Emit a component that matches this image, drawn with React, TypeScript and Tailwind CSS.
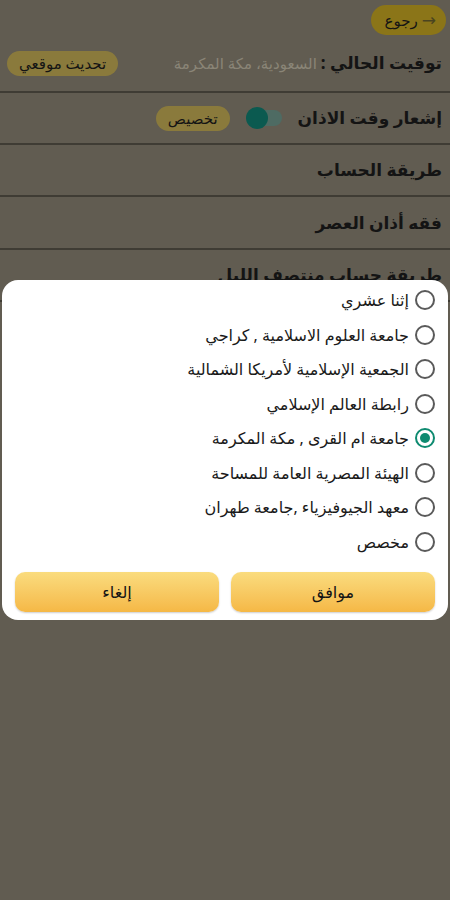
import React from "react";

const options = [
  "إثنا عشري",
  "جامعة العلوم الاسلامية , كراجي",
  "الجمعية الإسلامية لأمريكا الشمالية",
  "رابطة العالم الإسلامي",
  "جامعة ام القرى , مكة المكرمة",
  "الهيئة المصرية العامة للمساحة",
  "معهد الجيوفيزياء ,جامعة طهران",
  "مخصص",
];

function Radio({ checked }: { checked: boolean }) {
  return checked ? (
    <span className="w-[20px] h-[20px] rounded-full border-2 border-[#0e8a70] flex items-center justify-center shrink-0">
      <span className="w-[10px] h-[10px] rounded-full bg-[#0e8a70]" />
    </span>
  ) : (
    <span className="w-[20px] h-[20px] rounded-full border-2 border-[#5a5a5a] shrink-0" />
  );
}

export default function App() {
  return (
    <div
      dir="rtl"
      className="relative w-[450px] h-[900px] bg-[#615c51] overflow-hidden text-[#141414]"
      style={{ fontFamily: '"Noto Sans", "DejaVu Sans", sans-serif' }}
    >
      <div className="flex justify-start pt-[5px] pr-[4px]">
        <div className="flex items-center gap-[4px] h-[30px] pr-[10px] pl-[14px] rounded-full bg-[#8b7518] text-[15px]">
          <span className="text-[#4a4420] text-[17px]">→</span>
          <span>رجوع</span>
        </div>
      </div>

      <div className="flex items-center justify-between h-[58px] pr-[8px] pl-[7px] border-b-2 border-[#3f3c34]">
        <div className="flex items-center gap-[4px]">
          <span className="text-[17px] font-bold">توقيت الحالي :</span>
          <span className="text-[15px] text-[#8a8577]">السعودية، مكة المكرمة</span>
        </div>
        <div className="h-[25px] px-[12px] rounded-full bg-[#8a7a3c] flex items-center text-[15px]">
          تحديث موقعي
        </div>
      </div>

      <div className="flex items-center h-[52px] pr-[8px] gap-[16px] border-b-2 border-[#3f3c34]">
        <span className="text-[17px] font-bold">إشعار وقت الاذان</span>
        <div className="relative w-[34px] h-[16px] rounded-full bg-[#4e6b63] flex items-center">
          <span className="absolute left-[-2px] w-[22px] h-[22px] rounded-full bg-[#0b5a50]" />
        </div>
        <div className="h-[25px] px-[12px] rounded-full bg-[#8a7a3c] flex items-center text-[15px] mr-[2px]">
          تخصيص
        </div>
      </div>

      <div className="flex items-center h-[52px] pr-[8px] border-b-2 border-[#3f3c34]">
        <span className="text-[17px] font-bold">طريقة الحساب</span>
      </div>
      <div className="flex items-center h-[53px] pr-[8px] border-b-2 border-[#3f3c34]">
        <span className="text-[17px] font-bold">فقه أذان العصر</span>
      </div>
      <div className="flex items-center h-[52px] pr-[8px] border-b-2 border-[#3f3c34]">
        <span className="text-[17px] font-bold">طريقة حساب منتصف الليل</span>
      </div>

      <div className="absolute left-[2px] right-[2px] top-[280px] bg-white rounded-[16px] pt-[3px] pb-[8px] px-[13px]">
        <div className="flex flex-col">
          {options.map((o, i) => (
            <div key={i} className="flex items-center gap-[6px] h-[34.5px]">
              <Radio checked={i === 4} />
              <span className="text-[16px] text-[#1a1a1a]">{o}</span>
            </div>
          ))}
        </div>
        <div className="flex gap-[12px] mt-[13px]">
          <div className="flex-1 h-[40px] rounded-[10px] bg-gradient-to-b from-[#fadc7e] to-[#f5b845] flex items-center justify-center text-[16px] shadow-[0_1px_2px_rgba(0,0,0,0.2)]">
            موافق
          </div>
          <div className="flex-1 h-[40px] rounded-[10px] bg-gradient-to-b from-[#fadc7e] to-[#f5b845] flex items-center justify-center text-[16px] shadow-[0_1px_2px_rgba(0,0,0,0.2)]">
            إلغاء
          </div>
        </div>
      </div>
    </div>
  );
}
